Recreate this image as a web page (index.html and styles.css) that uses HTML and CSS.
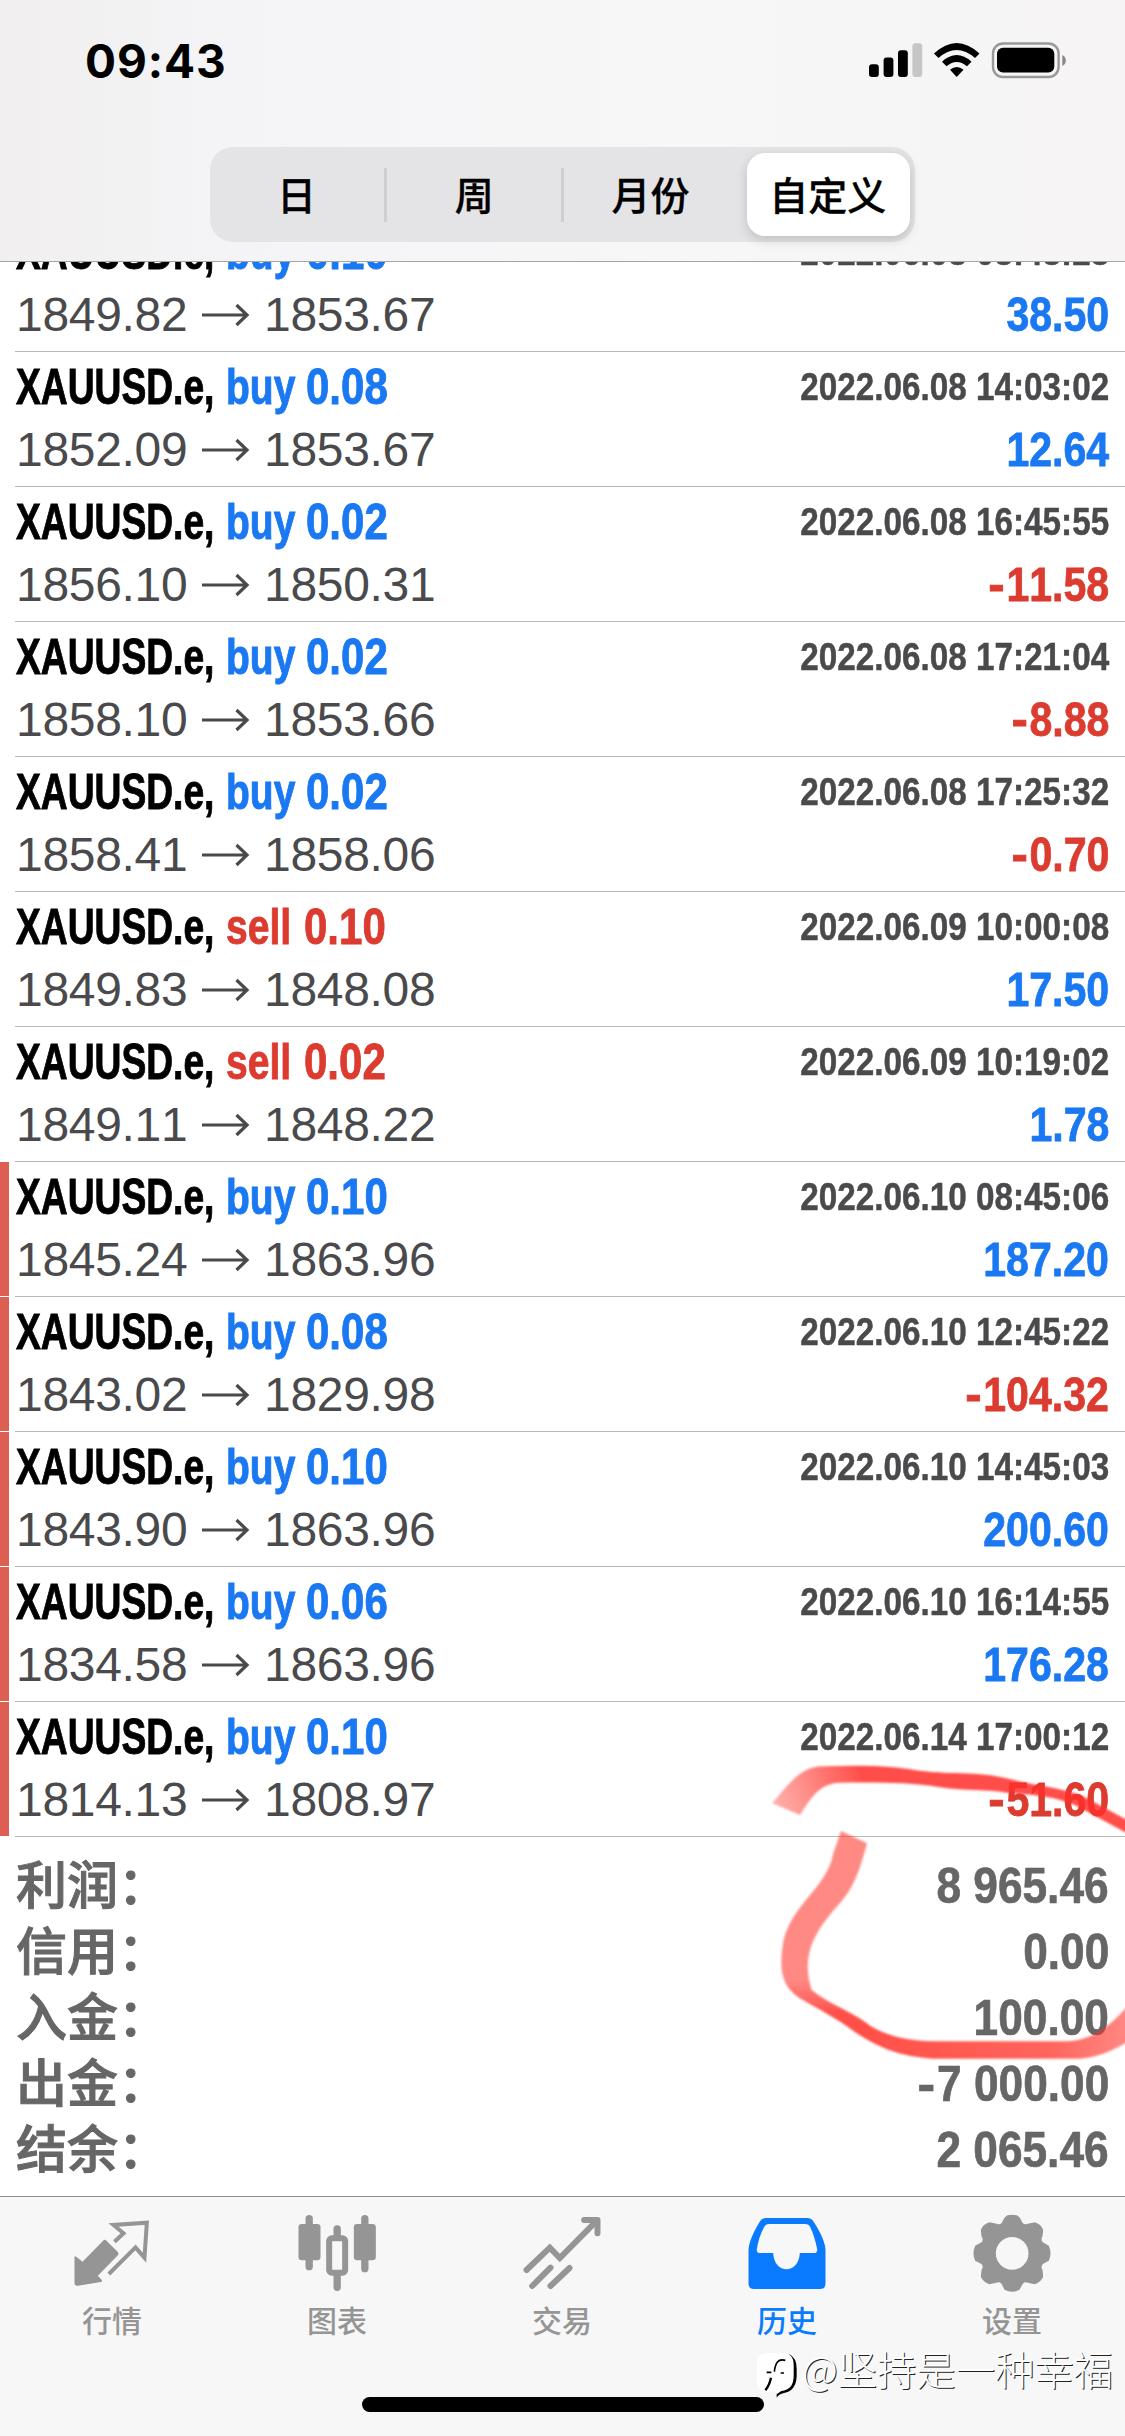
FILE: index.html
```html
<!DOCTYPE html>
<html lang="zh-CN">
<head>
<meta charset="utf-8">
<title>历史</title>
<link rel="stylesheet" href="styles.css">
</head>
<body>
<div class="screen">
  <header class="nav">
    <div class="status">
      <span class="clock">09:43</span>
      <svg class="status-icons" width="200" height="40" viewBox="869 40 200 40">
        <rect x="870" y="64.3" width="9.8" height="12.7" rx="3"/>
        <rect x="884.6" y="57.4" width="9.8" height="19.6" rx="3"/>
        <rect x="899" y="50.3" width="9.8" height="26.7" rx="3"/>
        <rect x="913.4" y="43.2" width="9.8" height="33.8" rx="3" fill="#c6c6c6"/>
        <path d="M935 53.500Q957.700 32.500 980.500 53.500L976 58Q957.700 42 939.500 58Z"/>
        <path d="M943 61.700Q957.700 48.500 972.500 61.700L968 66.300Q957.700 57.500 947.500 66.300Z"/>
        <path d="M951 69.800Q957.700 64 964.500 69.800L957.700 77Z"/>
        <rect x="994" y="43.500" width="65.600" height="33.500" rx="10" fill="none" stroke="#999" stroke-width="2.400"/>
        <rect x="998" y="47.800" width="57.300" height="24.600" rx="6"/>
        <path d="M1063.300 55C1068 57 1068 64 1063.300 66Z" fill="#888"/>
      </svg>
    </div>
    <div class="segments">
      <span class="segment">日</span>
      <span class="segment divided">周</span>
      <span class="segment divided">月份</span>
      <span class="segment selected">自定义</span>
    </div>
  </header>

  <main class="history">
    <div class="deals" id="deals"></div>
    <dl class="summary">
      <div class="sum"><dt>利润：</dt><dd>8 965.46</dd></div>
      <div class="sum"><dt>信用：</dt><dd>0.00</dd></div>
      <div class="sum"><dt>入金：</dt><dd>100.00</dd></div>
      <div class="sum"><dt>出金：</dt><dd><span class="minus">-</span>7 000.00</dd></div>
      <div class="sum"><dt>结余：</dt><dd>2 065.46</dd></div>
    </dl>
  </main>

  <footer class="tabs">
    <a class="tab">
      <svg class="icon" viewBox="220.500 102 234 234">
        <path d="M225 232Q225 226 230 230L249 245L311 182Q316 177 321 182L355 216Q360 221 355 226L295 287L307 300Q310 305 304 306L235 317Q225 319 225 310Z"/>
        <path d="M345 185L372 160L342 135L442 128L435 233L408 202L328 282" fill="none" stroke="#959595" stroke-width="12"/>
      </svg>
      <span class="tab-label">行情</span>
    </a>
    <a class="tab">
      <svg class="icon" viewBox="895.500 102 234 234">
        <rect x="918" y="105" width="22" height="166" rx="11"/><rect x="897" y="132" width="66" height="109" rx="10"/>
        <rect x="1085" y="105" width="22" height="172" rx="11"/><rect x="1063" y="132" width="66" height="109" rx="10"/>
        <rect x="1002" y="136" width="22" height="50" rx="11"/><rect x="1002" y="270" width="22" height="63" rx="11"/>
        <rect x="989" y="175" width="48" height="103" rx="8" fill="#f7f7f7" stroke="#959595" stroke-width="18"/>
      </svg>
      <span class="tab-label">图表</span>
    </a>
    <a class="tab">
      <svg class="icon" viewBox="370.500 102 234 234">
        <g fill="none" stroke="#959595" stroke-width="18" stroke-linecap="round">
          <path d="M381 270L451 203L481 234L592 122"/>
          <path d="M554 120H594V160" stroke-linejoin="round"/>
          <path d="M398 318L453 263M453 318L510 264"/>
        </g>
      </svg>
      <span class="tab-label">交易</span>
    </a>
    <a class="tab active">
      <svg class="icon" viewBox="25.500 102 234 234">
        <path fill-rule="evenodd" d="M82 114H202Q215 114 221 123Q258 180 258 212V311Q258 327 242 327H43Q27 327 27 311V212Q27 180 62 123Q68 114 82 114ZM89 132Q78 132 74 141Q58 170 52 208Q51 219 62 219H101C104 284 178 284 181 219H223Q234 219 233 208Q226 170 212 141Q208 132 197 132Z"/>
      </svg>
      <span class="tab-label">历史</span>
    </a>
    <a class="tab">
      <svg class="icon" viewBox="700.500 102 234 234">
        <path fill-rule="evenodd" d="M804 106Q818 103 832 106L840 112L850 130Q857 135 865 131L886 127Q904 133 911 149L909 169Q903 180 910 187L928 197Q938 220 928 242L910 252Q903 260 909 270L911 290Q904 306 886 313L865 308Q857 304 850 311L840 329Q818 341 795 329L786 311Q779 304 771 308L750 313Q731 306 724 290L726 270Q733 260 726 252L707 242Q697 220 707 197L726 187Q733 180 726 169L724 149Q731 133 750 127L771 131Q779 135 786 130L796 112ZM818 171A49 49 0 1 0 818 269A49 49 0 1 0 818 171Z"/>
      </svg>
      <span class="tab-label">设置</span>
    </a>
  </footer>

  <div class="home-bar"></div>

  <svg class="scribble" viewBox="0 0 1155 1500">
    <defs>
      <linearGradient id="fadeTop" gradientUnits="userSpaceOnUse" x1="110" y1="320" x2="360" y2="220">
        <stop offset="0" stop-color="#ff4a42" stop-opacity=".45"/>
        <stop offset="1" stop-color="#ff3028" stop-opacity=".85"/>
      </linearGradient>
      <linearGradient id="fadeLoop" gradientUnits="userSpaceOnUse" x1="0" y1="840" x2="0" y2="940">
        <stop offset="0" stop-color="#ff3a32" stop-opacity=".6"/>
        <stop offset="1" stop-color="#ff3028" stop-opacity=".84"/>
      </linearGradient>
      <linearGradient id="fadeRight" gradientUnits="userSpaceOnUse" x1="400" y1="0" x2="1155" y2="0">
        <stop offset="0" stop-color="#fff"/>
        <stop offset=".7" stop-color="#e0e0e0"/>
        <stop offset="1" stop-color="#b0b0b0"/>
      </linearGradient>
      <mask id="rightMask" maskUnits="userSpaceOnUse" x="0" y="0" width="1200" height="1500"><rect width="1200" height="1500" fill="url(#fadeRight)"/></mask>
      <filter id="soft"><feGaussianBlur stdDeviation="3"/></filter>
    </defs>
    <path filter="url(#soft)" fill="url(#fadeTop)" d="M97 310C140 260 180 198 250 199C370 195 450 197 520 209C620 225 720 213 800 235C900 262 990 262 1060 305L1165 362V402L1050 340C970 285 870 285 800 278C740 268 680 273 600 262C500 245 400 248 300 248C240 250 215 290 180 345Z"/>
    <g mask="url(#rightMask)">
      <path filter="url(#soft)" fill="url(#fadeLoop)" d="M303 393L381 430C360 510 340 570 290 620C230 690 180 760 215 870C270 915 340 935 395 980C450 1010 500 1022 580 1024H980C1050 1020 1100 990 1165 915V1025C1120 1050 1080 1072 1020 1076H580C480 1070 420 1045 350 1000C290 955 240 930 185 898C120 860 120 800 127 745C140 620 260 570 280 460Z"/>
    </g>
  </svg>

  <div class="watermark">
    <svg class="wm-logo" width="42" height="54" viewBox="0 0 126 162">
      <path fill="#000" d="M100 22Q122 32 122 66V88Q120 132 84 138Q68 142 62 152V128Z"/>
      <path fill="#fff" d="M34 18H80Q113 18 113 54V88Q113 128 76 132L62 142L58 134H34Q2 134 2 98V54Q2 18 34 18Z"/>
      <path fill="none" stroke="#000" stroke-width="5" d="M88 40C66 34 58 48 55 74M32 76H46M74 78H84"/>
      <path fill="none" stroke="#000" stroke-width="7" d="M45 92C42 106 38 118 28 130"/>
    </svg>
    <span class="wm-text">@坚持是一种幸福</span>
  </div>
</div>
<script src="deals.js"></script>
</body>
</html>
```
FILE: styles.css
```css
body { margin: 0; background: #fff; }

.screen {
  position: relative;
  width: 1125px;
  height: 2436px;
  overflow: hidden;
  display: flex;
  flex-direction: column;
  font-family: "Liberation Sans", "Noto Sans CJK SC", sans-serif;
  font-kerning: none;
  background: #fff;
}

.nav {
  box-sizing: border-box;
  flex: none;
  height: 262px;
  border-bottom: 1px solid #a5a5a7;
  background: linear-gradient(90deg, #f1eff0 0, #f5f5f7 300px, #f7f7f8 700px, #f6f4f5 1125px);
}
.status {
  display: flex;
  justify-content: space-between;
  align-items: flex-start;
  height: 107px;
  padding: 40px 57px 0 85px;
}
.clock {
  font: 700 46px/42px Inter, sans-serif;
  letter-spacing: 0.9px;
}
.segments {
  box-sizing: border-box;
  display: grid;
  grid-template-columns: repeat(4, 1fr);
  width: 705px;
  height: 95px;
  margin: 0 0 0 210px;
  border-radius: 23px;
  background: #e4e4e6;
}
.segment {
  display: flex;
  align-items: center;
  justify-content: center;
  font: 500 39px/60px "Noto Sans CJK SC", sans-serif;
  padding: 0 3px 3px 0;
  -webkit-text-stroke: 0.3px;
}
.segment.divided {
  margin-left: -2px;
  padding: 0 0 3px 2px;
  background: linear-gradient(#cfcfd2, #cfcfd2) 0 50% / 3px 54px no-repeat;
}
.segment.selected {
  margin: 6px 5px 6px 8px;
  border-radius: 18px;
  padding-right: 1px;
  background: #fff;
  box-shadow: 0 4px 12px rgba(0, 0, 0, .16);
}

.history {
  flex: none;
  height: 1934px;
  overflow: hidden;
}
.deals { margin-top: -45px; }
.deal {
  box-sizing: border-box;
  height: 135px;
  padding: 5px 16px 0 16px;
  background: linear-gradient(#b8b8bb, #b8b8bb) 15px 100% / 100% 1px no-repeat;
}
.deal.marked {
  background:
    linear-gradient(#b8b8bb, #b8b8bb) 15px 100% / 100% 1px no-repeat,
    linear-gradient(#dd5f54, #dd5f54) 0 0 / 9px 134px no-repeat;
}
.line {
  display: flex;
  justify-content: space-between;
  height: 63px;
  line-height: 60px;
  white-space: nowrap;
}
.title { display: flex; font-size: 50px; font-weight: 700; -webkit-text-stroke: 0.9px; }
.symbol, .side, .volume { transform-origin: 0 50%; }
.symbol { width: 210px; transform: scaleX(.744); }
.side { width: 80px; transform: scaleX(.78); }
.side.sell { width: 78px; }
.volume { transform: scaleX(.84); }
.buy { color: #1a78f2; }
.sell { color: #dc3b2f; }
.time, .profit, .sum dd {
  transform-origin: 100% 50%;
  font-weight: 700;
  -webkit-text-stroke: 0.5px;
}
.time { font-size: 39px; color: #4a4a4d; transform: scaleX(.853); }
.prices { display: flex; font-size: 48px; color: #4a4a4d; letter-spacing: -0.3px; }
.from { width: 186px; }
.arrow { width: 62px; height: 60px; fill: none; stroke: #4a4a4d; stroke-width: 3.2; }
.profit { font-size: 48px; transform: scaleX(.855); -webkit-text-stroke: 0.8px; }
.minus { display: inline-block; margin-right: 2px; transform: scaleX(1.2); transform-origin: 100% 50%; }

.summary { margin: 0; padding: 16px 16px 0 16px; color: #666; }
.sum {
  display: flex;
  justify-content: space-between;
  height: 66px;
  line-height: 66px;
}
.sum dt {
  font: 500 51px/58px "Noto Sans CJK SC", sans-serif;
  -webkit-text-stroke: 1px;
}
.sum dd { margin: 0; font-size: 50px; transform: scaleX(.885); -webkit-text-stroke: 0.7px; }

.tabs {
  box-sizing: border-box;
  flex: none;
  display: grid;
  grid-template-columns: repeat(5, 1fr);
  height: 240px;
  border-top: 1px solid #8e8e8e;
  background: #f7f7f7;
}
.tab {
  display: flex;
  flex-direction: column;
  align-items: center;
  padding: 17px 1px 0 0;
  color: #959595;
}
.tab.active { color: #0a7bff; }
.icon { width: 78px; height: 78px; fill: currentColor; }
.tab-label {
  margin-top: 7px;
  font: 500 30px/40px "Noto Sans CJK SC", sans-serif;
}

.home-bar {
  position: absolute;
  left: 362px;
  top: 2397px;
  width: 402px;
  height: 15px;
  border-radius: 8px;
  background: #000;
}
.scribble {
  position: absolute;
  left: 740px;
  top: 1700px;
  width: 385px;
  height: 500px;
}
.watermark {
  position: absolute;
  left: 756px;
  top: 2347px;
  display: flex;
}
.wm-text {
  margin-left: 4px;
  font: 300 39.300px/42px "Noto Sans CJK SC", sans-serif;
  color: #fff;
  text-shadow: 1px 1px 0 #222;
  white-space: nowrap;
}
```
FILE: deals.js
```js
const deals = [
  ["buy", "0.10", "2022.06.08 08:48:28", "1849.82", "1853.67", "38.50"],
  ["buy", "0.08", "2022.06.08 14:03:02", "1852.09", "1853.67", "12.64"],
  ["buy", "0.02", "2022.06.08 16:45:55", "1856.10", "1850.31", "-11.58"],
  ["buy", "0.02", "2022.06.08 17:21:04", "1858.10", "1853.66", "-8.88"],
  ["buy", "0.02", "2022.06.08 17:25:32", "1858.41", "1858.06", "-0.70"],
  ["sell", "0.10", "2022.06.09 10:00:08", "1849.83", "1848.08", "17.50"],
  ["sell", "0.02", "2022.06.09 10:19:02", "1849.11", "1848.22", "1.78"],
  ["buy", "0.10", "2022.06.10 08:45:06", "1845.24", "1863.96", "187.20", true],
  ["buy", "0.08", "2022.06.10 12:45:22", "1843.02", "1829.98", "-104.32", true],
  ["buy", "0.10", "2022.06.10 14:45:03", "1843.90", "1863.96", "200.60", true],
  ["buy", "0.06", "2022.06.10 16:14:55", "1834.58", "1863.96", "176.28", true],
  ["buy", "0.10", "2022.06.14 17:00:12", "1814.13", "1808.97", "-51.60", true]
];

document.getElementById("deals").innerHTML = deals.map(([side, volume, time, from, to, profit, marked]) => `
  <div class="deal${marked ? " marked" : ""}">
    <div class="line">
      <div class="title"><span class="symbol">XAUUSD.e,</span><span class="side ${side}">${side}</span><span class="volume ${side}">${volume}</span></div>
      <span class="time">${time}</span>
    </div>
    <div class="line">
      <div class="prices"><span class="from">${from}</span><svg class="arrow" viewBox="0 0 62 60"><path d="M0 30H45M34.500 20L45 30L34.500 40"/></svg><span>${to}</span></div>
      <span class="profit ${profit[0] === "-" ? "sell" : "buy"}">${profit.replace("-", '<span class="minus">-</span>')}</span>
    </div>
  </div>`).join("");
```
